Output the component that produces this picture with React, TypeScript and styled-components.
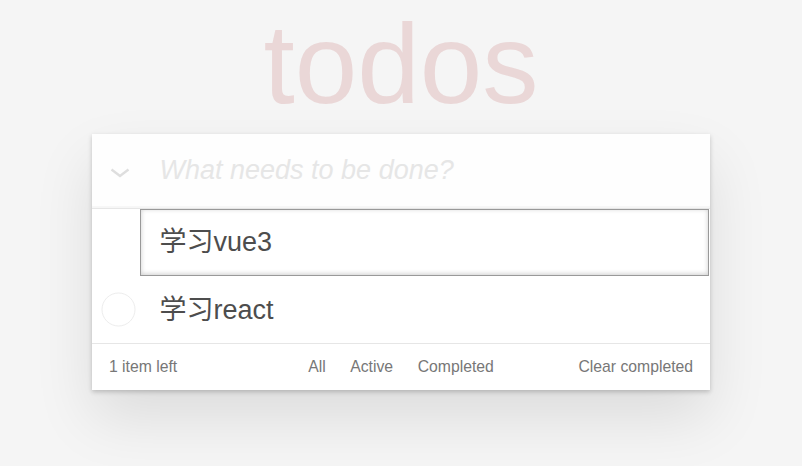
import React from "react";
import styled, { createGlobalStyle } from "styled-components";

const GlobalStyle = createGlobalStyle`
  html, body {
    margin: 0;
    padding: 0;
  }
  body {
    min-height: 100vh;
    background: #f5f5f5;
    color: #4d4d4d;
    font: 15.75px "Liberation Sans", Arial, "Noto Sans CJK SC", sans-serif;
    line-height: 1.4em;
  }
`;

const Page = styled.div`
  width: 618px;
  min-height: 100vh;
  box-sizing: border-box;
  margin: 0 auto;
  padding: 8px 0 45px;
`;

const Title = styled.h1`
  margin: 0 0 14px;
  height: 112px;
  font-size: 112.5px;
  line-height: 112px;
  font-weight: 400;
  text-align: center;
  color: rgba(175, 47, 47, 0.15);
  font-family: "Liberation Sans", Arial, sans-serif;
`;

const TodoApp = styled.section`
  background: #fff;
  box-shadow: 0 2.25px 4.5px 0 rgba(0, 0, 0, 0.2), 0 28px 56px 0 rgba(0, 0, 0, 0.1);
`;

const Header = styled.header`
  display: flex;
  align-items: stretch;
  height: 74px;
  background: rgba(0, 0, 0, 0.003);
  box-shadow: inset 0 -2px 1px rgba(0, 0, 0, 0.03);
`;

const ToggleAll = styled.button`
  width: 67.5px;
  flex: none;
  border: 0;
  padding: 3px 0 0 18px;
  margin: 0;
  background: transparent;
  display: flex;
  align-items: center;
  justify-content: flex-start;
  box-sizing: border-box;
  cursor: pointer;
`;

const NewTodo = styled.input`
  flex: 1;
  min-width: 0;
  border: 0;
  outline: none;
  background: transparent;
  padding: 18px 18px 18px 0;
  font: inherit;
  font-size: 27px;
  line-height: 37.8px;
  color: #4d4d4d;
  &::placeholder {
    font-style: italic;
    color: #e6e6e6;
  }
`;

const Main = styled.section`
  border-top: 1px solid #e6e6e6;
`;

const List = styled.ul`
  margin: 0;
  padding: 0;
  list-style: none;
`;

const Item = styled.li<{ $editing?: boolean }>`
  display: flex;
  align-items: center;
  font-size: 27px;
  border-bottom: ${(p) => (p.$editing ? "none" : "1px solid #ededed")};
  &:last-child {
    border-bottom: none;
  }
`;

const EditInput = styled.input`
  display: block;
  box-sizing: border-box;
  width: 569px;
  margin: 0 0 0 48.4px;
  padding: 13.5px 18px;
  font: inherit;
  font-size: 27px;
  line-height: 37.8px;
  color: #4d4d4d;
  border: 1px solid #999;
  box-shadow: inset 0 -1px 5.6px 0 rgba(0, 0, 0, 0.2);
  outline: none;
  background: #fff;
`;

const ToggleBox = styled.div`
  width: 67.5px;
  flex: none;
  display: flex;
  align-items: center;
  padding: 1px 0 0 9px;
  box-sizing: border-box;
`;

const Label = styled.label`
  flex: 1;
  padding: 18.5px 16.875px 16.5px 0;
  line-height: 1.2;
  word-break: break-all;
  color: #4d4d4d;
`;

const Footer = styled.footer`
  display: grid;
  grid-template-columns: 1fr auto 1fr;
  align-items: center;
  color: #777;
  height: 22.5px;
  padding: 12px 16.875px 11.5px;
  border-top: 1px solid #e6e6e6;
`;

const Count = styled.span`
  justify-self: start;
  line-height: 22px;
`;

const Filters = styled.ul`
  display: flex;
  margin: 0;
  padding: 0;
  list-style: none;
`;

const FilterLink = styled.a<{ $selected?: boolean }>`
  display: block;
  color: inherit;
  text-decoration: none;
  margin: 0 3.4px;
  padding: 0 7.9px;
  line-height: 20px;
  border: 1px solid ${(p) => (p.$selected ? "rgba(175, 47, 47, 0.2)" : "transparent")};
  border-radius: 3px;
`;

const ClearButton = styled.button`
  justify-self: end;
  border: 0;
  padding: 0;
  margin: 0;
  background: none;
  font: inherit;
  color: inherit;
  line-height: 22px;
  cursor: pointer;
`;

const Chevron = () => (
  <svg width="20" height="10" viewBox="0 0 20 10" aria-hidden>
    <path d="M1.5 1.5 L10 8 L18.5 1.5" fill="none" stroke="#dedede" strokeWidth="2.4" />
  </svg>
);

const Circle = () => (
  <svg width="35" height="35" viewBox="0 0 35 35" aria-hidden>
    <circle cx="17.5" cy="17.5" r="16.5" fill="none" stroke="#ededed" strokeWidth="1" />
  </svg>
);

export default function App() {
  return (
    <>
      <GlobalStyle />
      <Page>
        <Title>todos</Title>
        <TodoApp>
          <Header>
            <ToggleAll aria-label="Mark all as complete">
              <Chevron />
            </ToggleAll>
            <NewTodo placeholder="What needs to be done?" />
          </Header>
          <Main>
            <List>
              <Item $editing>
                <EditInput defaultValue="学习vue3" />
              </Item>
              <Item>
                <ToggleBox>
                  <Circle />
                </ToggleBox>
                <Label>学习react</Label>
              </Item>
            </List>
          </Main>
          <Footer>
            <Count>1 item left</Count>
            <Filters>
              <li>
                <FilterLink href="#/">All</FilterLink>
              </li>
              <li>
                <FilterLink href="#/active">Active</FilterLink>
              </li>
              <li>
                <FilterLink href="#/completed">Completed</FilterLink>
              </li>
            </Filters>
            <ClearButton>Clear completed</ClearButton>
          </Footer>
        </TodoApp>
      </Page>
    </>
  );
}
